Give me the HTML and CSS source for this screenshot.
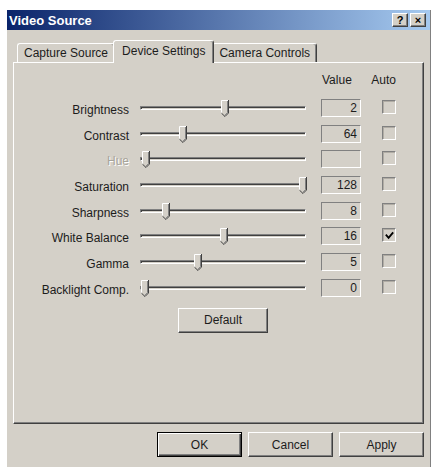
FILE: index.html
```html
<!DOCTYPE html>
<html>
<head>
<meta charset="utf-8">
<title>Video Source</title>
<link rel="stylesheet" href="styles.css">
</head>
<body>
<div class="window">
  <div class="titlebar">
    <span class="title">Video Source</span>
    <div class="tbtns"><span class="tbtn">?</span><span class="tbtn">×</span></div>
  </div>
  <div class="client">
    <div class="tabs">
      <div class="tab">Capture Source</div>
      <div class="tab active">Device Settings</div>
      <div class="tab">Camera Controls</div>
    </div>
    <div class="panel">
      <div class="grid">
        <div></div><div></div><div class="hdr hval">Value</div><div class="hdr hauto">Auto</div>

        <div class="lbl">Brightness</div>
        <div class="slider"><div class="track"></div><svg class="thumb" style="left:81px" viewBox="0 0 8 17"><use href="#th"/></svg></div>
        <div class="val">2</div><div class="chk"></div>

        <div class="lbl">Contrast</div>
        <div class="slider"><div class="track"></div><svg class="thumb" style="left:39px" viewBox="0 0 8 17"><use href="#th"/></svg></div>
        <div class="val">64</div><div class="chk"></div>

        <div class="lbl dis">Hue</div>
        <div class="slider"><div class="track"></div><svg class="thumb" style="left:2px" viewBox="0 0 8 17"><use href="#th"/></svg></div>
        <div class="val"></div><div class="chk"></div>

        <div class="lbl">Saturation</div>
        <div class="slider"><div class="track"></div><svg class="thumb" style="left:159px" viewBox="0 0 8 17"><use href="#th"/></svg></div>
        <div class="val">128</div><div class="chk"></div>

        <div class="lbl">Sharpness</div>
        <div class="slider"><div class="track"></div><svg class="thumb" style="left:22px" viewBox="0 0 8 17"><use href="#th"/></svg></div>
        <div class="val">8</div><div class="chk"></div>

        <div class="lbl">White Balance</div>
        <div class="slider"><div class="track"></div><svg class="thumb" style="left:80px" viewBox="0 0 8 17"><use href="#th"/></svg></div>
        <div class="val">16</div><div class="chk"><svg class="tick" viewBox="0 0 12 12"><polyline points="2,5 5,8.5 10,2.5"/></svg></div>

        <div class="lbl">Gamma</div>
        <div class="slider"><div class="track"></div><svg class="thumb" style="left:54px" viewBox="0 0 8 17"><use href="#th"/></svg></div>
        <div class="val">5</div><div class="chk"></div>

        <div class="lbl">Backlight Comp.</div>
        <div class="slider"><div class="track"></div><svg class="thumb" style="left:1px" viewBox="0 0 8 17"><use href="#th"/></svg></div>
        <div class="val">0</div><div class="chk"></div>

        <button class="btn def">Default</button>
      </div>
    </div>
    <div class="actions">
      <button class="btn btn-default">OK</button>
      <button class="btn">Cancel</button>
      <button class="btn">Apply</button>
    </div>
  </div>
</div>
<svg class="defs" width="0" height="0">
  <defs>
    <g id="th">
      <polygon points="0,0 8,0 8,13 4,17 0,13" fill="#d4d0c8"/>
      <polyline points="0.5,13 0.5,0.5 7,0.5" fill="none" stroke="#ffffff" stroke-width="1"/>
      <polyline points="7.5,0 7.5,13 4,16.5 0.5,13.2" fill="none" stroke="#404040" stroke-width="1"/>
      <polyline points="6.5,1 6.5,12.6 4,15.2" fill="none" stroke="#808080" stroke-width="1"/>
    </g>
  </defs>
</svg>
</body>
</html>
```

FILE: styles.css
```css
* { box-sizing: border-box; }

body {
  margin: 0;
  background: #ffffff;
  font-family: "Liberation Sans", Arial, sans-serif;
  font-size: 12px;
  color: #1c1c1c;
}

.defs { position: absolute; }

.window {
  margin: 10px 0 0 7px;
  width: 424px;
  height: 457px;
  background: #d4d0c8;
  display: flex;
  flex-direction: column;
  border-right: 1px solid #808080;
}

.titlebar {
  flex: none;
  height: 20px;
  display: flex;
  align-items: center;
  justify-content: space-between;
  padding: 0 4px 0 2px;
  background: linear-gradient(to right, #0a246a, #a6caf0);
}

.title {
  color: #ffffff;
  font-weight: bold;
  font-size: 13px;
}

.tbtns { display: flex; gap: 2px; }

.tbtn {
  width: 16px;
  height: 14px;
  background: #d4d0c8;
  border: 1px solid;
  border-color: #ffffff #404040 #404040 #ffffff;
  box-shadow: inset -1px -1px #808080;
  display: flex;
  align-items: center;
  justify-content: center;
  font-weight: bold;
  font-size: 11px;
  line-height: 1;
  color: #000;
}

.client {
  padding: 10px 6px 0 6px;
  display: flex;
  flex-direction: column;
}

.tabs {
  display: flex;
  align-items: flex-end;
  height: 22px;
  padding-left: 4px;
}

.tab {
  height: 19px;
  padding: 0 6px;
  border: 1px solid;
  border-bottom: none;
  border-color: #ffffff #404040 transparent #ffffff;
  border-radius: 3px 3px 0 0;
  box-shadow: inset -1px 0 #808080;
  display: flex;
  align-items: center;
  white-space: nowrap;
}

.tab.active {
  height: 23px;
  margin: 0 -2px -1px;
  padding: 0 8px 2px;
  position: relative;
  z-index: 1;
  background: #d4d0c8;
}

.panel {
  height: 362px;
  border: 1px solid;
  border-color: #ffffff #404040 #404040 #ffffff;
  box-shadow: inset -1px -1px #808080;
  padding-top: 7px;
}

.grid {
  display: grid;
  grid-template-columns: 126px 166px 55px 35px;
  grid-template-rows: 27px repeat(8, 25.7px) auto;
}

.hdr { line-height: 20px; }
.hval { justify-self: end; width: 40px; padding-left: 1px; }
.hauto { text-align: right; }

.lbl {
  align-self: center;
  text-align: right;
  padding-right: 11px;
  white-space: nowrap;
}

.lbl.dis {
  color: #a8a49b;
  text-shadow: 1px 1px #ffffff;
}

.slider { position: relative; }

.track {
  position: absolute;
  left: 0;
  right: 0;
  top: 9px;
  height: 4px;
  border: 1px solid;
  border-color: #808080 #ffffff #ffffff #808080;
  box-shadow: inset 1px 1px #404040;
}

.thumb {
  position: absolute;
  top: 3px;
  width: 8px;
  height: 17px;
}

.val {
  justify-self: end;
  align-self: start;
  margin-top: 2px;
  width: 40px;
  height: 18px;
  border: 1px solid;
  border-color: #808080 #ffffff #ffffff #808080;
  text-align: right;
  padding-right: 3px;
  line-height: 16px;
}

.chk {
  justify-self: end;
  align-self: start;
  margin-top: 3px;
  width: 14px;
  height: 14px;
  border: 1px solid;
  border-color: #808080 #ffffff #ffffff #808080;
  box-shadow: inset 1px 1px #b0aca4;
  display: flex;
  align-items: center;
  justify-content: center;
}

.tick {
  width: 11px;
  height: 11px;
  fill: none;
  stroke: #000;
  stroke-width: 2;
}

.btn {
  font: inherit;
  color: inherit;
  background: #d4d0c8;
  border: 1px solid;
  border-color: #ffffff #404040 #404040 #ffffff;
  box-shadow: inset -1px -1px #808080;
  padding: 0;
}

.def {
  grid-column: 2;
  justify-self: center;
  margin-top: 5px;
  width: 90px;
  height: 25px;
}

.actions {
  display: flex;
  justify-content: flex-end;
  gap: 6px;
  margin-top: 8px;
}

.actions .btn {
  width: 85px;
  height: 25px;
}

.actions .btn-default {
  border-color: #000;
  box-shadow: inset 1px 1px #ffffff, inset -1px -1px #404040, inset -2px -2px #808080;
}
```
